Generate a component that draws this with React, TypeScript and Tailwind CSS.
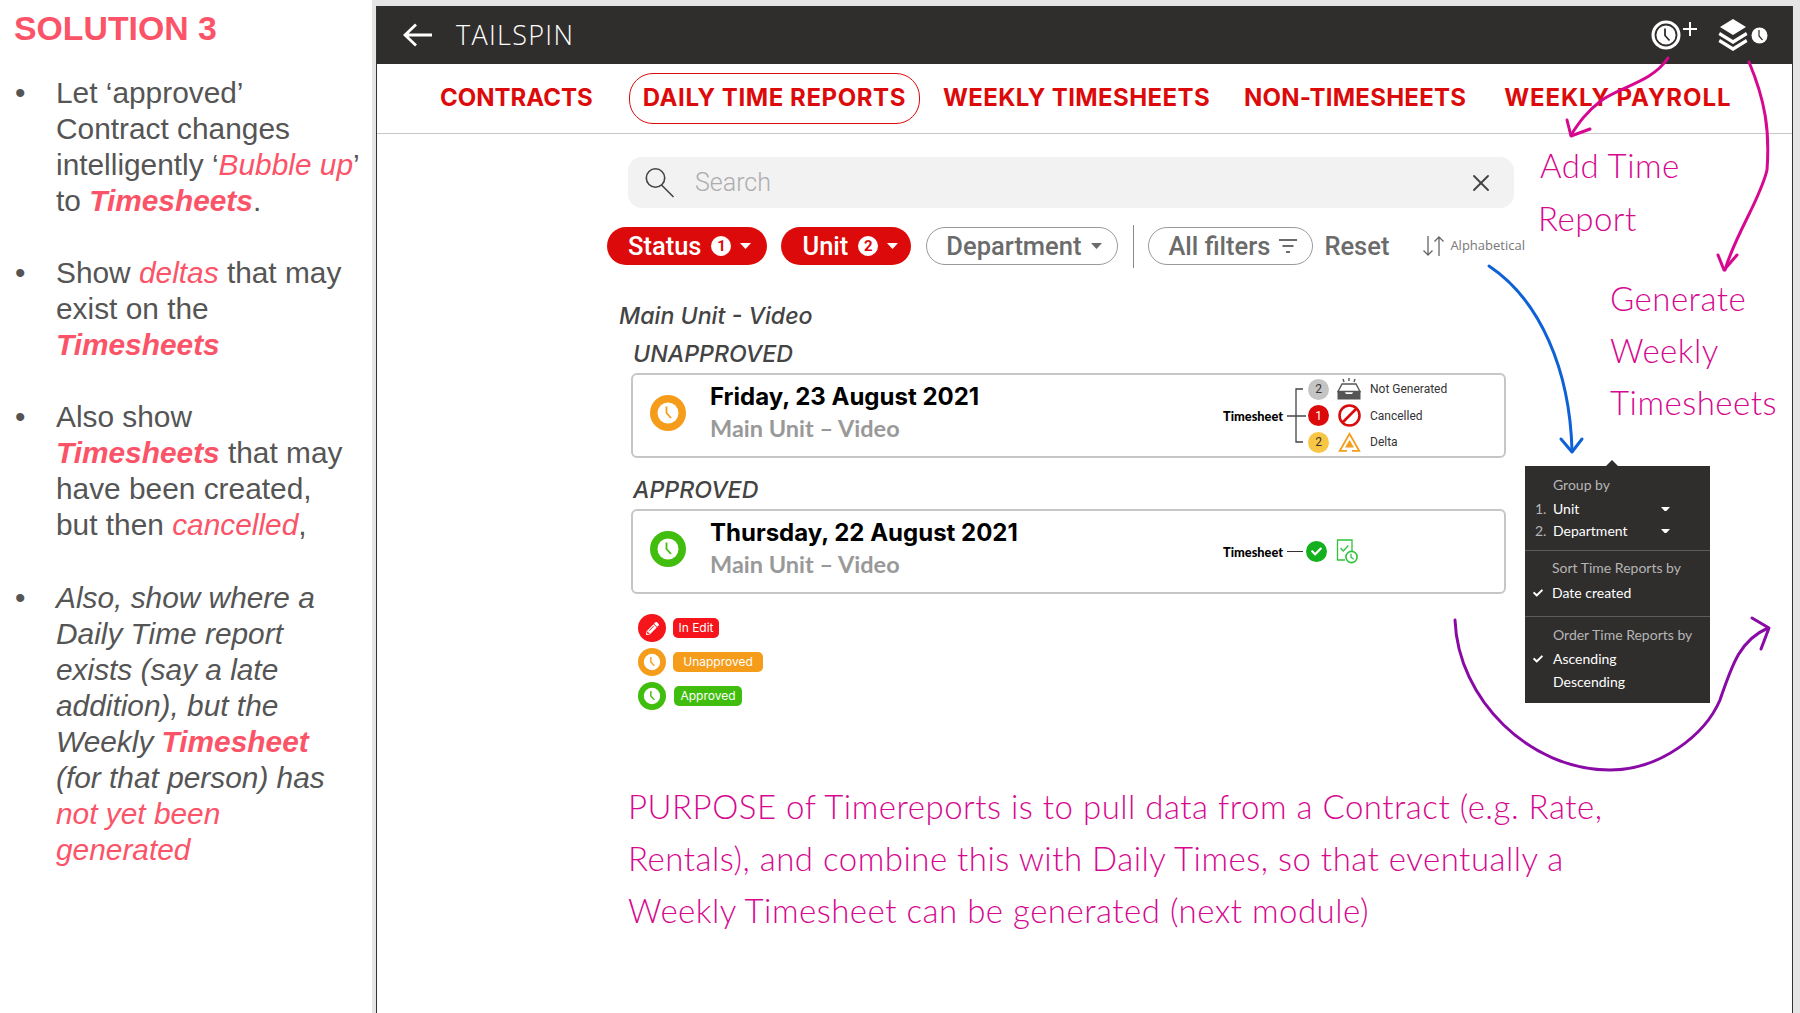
import { X } from "lucide-react"
import { FaCheck, FaPencilAlt } from "react-icons/fa"

const sans = "font-['Liberation_Sans',Arial,sans-serif]"
const hand = "font-['Lato',sans-serif] font-light text-[#d6088f]"

function Caret({ color = "white", w = 12 }: { color?: string; w?: number }) {
  return (
    <svg width={w} height={w * 0.55} viewBox="0 0 12 6.6" className="shrink-0">
      <path d="M0 0h12L6 6.6z" fill={color} />
    </svg>
  )
}

function ClockBadge({ color, size = 36 }: { color: string; size?: number }) {
  return (
    <svg width={size} height={size} viewBox="0 0 36 36" className="shrink-0">
      <circle cx="18" cy="18" r="18" fill={color} />
      <circle cx="18" cy="18" r="10.5" fill="white" />
      <path d="M16.5 11.5v6.5l4.5 5" fill="none" stroke={color} strokeWidth="1.8" />
    </svg>
  )
}

function CountDot({ bg, fg, n }: { bg: string; fg: string; n: number }) {
  return (
    <span className={`flex h-[21px] w-[21px] shrink-0 items-center justify-center rounded-full text-[12px] ${bg} ${fg}`}>
      {n}
    </span>
  )
}

function InboxIcon() {
  return (
    <svg width="24" height="22" viewBox="0 0 24 22">
      <path d="M6 1l1 3M12 0v3M18 1l-1 3" stroke="#555" strokeWidth="1.4" fill="none" />
      <path d="M5 6h14l4 7.5H1z" fill="none" stroke="#555" strokeWidth="1.4" />
      <path d="M0.5 13h6.5l2 3h6l2-3h6.5v8.5H0.5z" fill="#555" />
    </svg>
  )
}

function CancelledIcon() {
  return (
    <svg width="23" height="23" viewBox="0 0 23 23">
      <circle cx="11.5" cy="11.5" r="10" fill="none" stroke="#d90b0b" strokeWidth="2.6" />
      <path d="M18.5 4.5L4.5 18.5" stroke="#d90b0b" strokeWidth="2.6" />
    </svg>
  )
}

function DeltaIcon() {
  return (
    <svg width="23" height="20" viewBox="0 0 23 20">
      <path d="M9 18.8H1.8L11.5 1.8l9.7 17H14" fill="none" stroke="#f59c1a" strokeWidth="1.8" />
      <path d="M11.5 8l4.5 7.5H7z" fill="#f59c1a" />
    </svg>
  )
}

function SheetClockIcon() {
  return (
    <svg width="22" height="25" viewBox="0 0 22 25">
      <path d="M9 21H1.5V1h14.5v11" fill="none" stroke="#2fc23a" strokeWidth="1.3" />
      <path d="M4.5 9l2.8 3 5-5.5" fill="none" stroke="#2fc23a" strokeWidth="1.3" />
      <circle cx="15.5" cy="18" r="5.6" fill="white" stroke="#2fc23a" strokeWidth="1.6" />
      <path d="M15 14.8v3.4l2.6 2" fill="none" stroke="#2fc23a" strokeWidth="1.3" />
    </svg>
  )
}

const Red = ({ children, bold }: { children: React.ReactNode; bold?: boolean }) => (
  <em className={`text-[#fb5468] ${bold ? "font-bold" : ""}`}>{children}</em>
)

function Bullet({ children, italic }: { children: React.ReactNode; italic?: boolean }) {
  return (
    <div className={`mb-[36.2px] flex ${italic ? "italic" : ""}`}>
      <span className="w-[42px] pl-[1px] not-italic">•</span>
      <p className="flex-1">{children}</p>
    </div>
  )
}

function Sidebar() {
  return (
    <aside className={`w-[372px] shrink-0 bg-white pl-[14px] pt-[10px] text-[29.85px] leading-[36px] text-[#555] ${sans}`}>
      <h1 className="mb-[29px] text-[33.8px] font-bold text-[#fb5468]">SOLUTION 3</h1>
      <Bullet>
        Let ‘approved’<br />Contract changes<br />intelligently ‘<Red>Bubble up</Red>’<br />to <Red bold>Timesheets</Red>.
      </Bullet>
      <Bullet>
        Show <Red>deltas</Red> that may<br />exist on the<br /><Red bold>Timesheets</Red>
      </Bullet>
      <Bullet>
        Also show<br /><Red bold>Timesheets</Red> that may<br />have been created,<br />but then <Red>cancelled</Red>,
      </Bullet>
      <Bullet italic>
        Also, show where a<br />Daily Time report<br />exists (say a late<br />addition), but the<br />Weekly <Red bold>Timesheet</Red><br />(for that person) has<br /><Red>not yet been</Red><br /><Red>generated</Red>
      </Bullet>
    </aside>
  )
}

function TopBar() {
  return (
    <header className="flex h-[58px] items-center bg-[#302e2d] text-white">
      <svg width="30" height="24" viewBox="0 0 30 24" className="ml-[26px]">
        <path d="M29 12H2M13 1.5L2 12l11 10.5" fill="none" stroke="white" strokeWidth="2.8" />
      </svg>
      <span className="ml-[23px] font-['Open_Sans',sans-serif] text-[27px] font-light tracking-[1.3px]">TAILSPIN</span>
      <div className="ml-auto mr-[24px] flex items-center">
        <svg width="46" height="34" viewBox="0 0 46 34">
          <circle cx="15" cy="17" r="14.5" fill="white" />
          <circle cx="15" cy="17" r="10.5" fill="none" stroke="#302e2d" strokeWidth="1.8" />
          <path d="M14 10.5v7l4.5 5" fill="none" stroke="#302e2d" strokeWidth="1.8" />
          <path d="M39 4v14M32 11h14" stroke="white" strokeWidth="2" />
        </svg>
        <svg width="30" height="32" viewBox="0 0 30 32" className="ml-[21px]">
          <path d="M15 0l13 8-13 8L2 8z" fill="white" />
          <path d="M2 13l13 8 13-8 1.5 3L15 25 .5 16z" fill="white" />
          <path d="M2 20l13 8 13-8 1.5 3L15 32 .5 23z" fill="white" />
        </svg>
        <svg width="17" height="17" viewBox="0 0 17 17" className="ml-[3px]">
          <circle cx="8.5" cy="8.5" r="8" fill="white" />
          <path d="M8 3v6l3.5 4" fill="none" stroke="#302e2d" strokeWidth="1.2" />
        </svg>
      </div>
    </header>
  )
}

function Tabs() {
  return (
    <nav className="flex h-[70px] items-center border-b border-[#c8c8c8] pb-px pl-[63px] font-['Inter',sans-serif] text-[24px] font-bold text-[#dc0a0a]">
      <span className="whitespace-nowrap">CONTRACTS</span>
      <span className="ml-[36px] flex h-[51px] items-center whitespace-nowrap rounded-[24px] border border-[#dc0a0a] px-[13px] tracking-[0.57px]">
        DAILY TIME REPORTS
      </span>
      <span className="ml-[23px] whitespace-nowrap tracking-[0.4px]">WEEKLY TIMESHEETS</span>
      <span className="ml-[34px] whitespace-nowrap tracking-[0.25px]">NON-TIMESHEETS</span>
      <span className="ml-[38px] whitespace-nowrap tracking-[0.9px]">WEEKLY PAYROLL</span>
    </nav>
  )
}

function SearchRow() {
  return (
    <div className="ml-[251px] mt-[23px] flex h-[51px] w-[886px] items-center rounded-[14px] bg-[#f2f2f2] pl-[17px] pr-[19px]">
      <svg width="30" height="31" viewBox="0 0 30 31" className="shrink-0">
        <circle cx="10.5" cy="11" r="9.2" fill="none" stroke="#444" strokeWidth="1.6" />
        <path d="M16.5 18L28.5 30" stroke="#444" strokeWidth="1.6" />
      </svg>
      <span className="ml-[20px] pt-px font-['Roboto',sans-serif] text-[25px] font-light text-[#adadad]">Search</span>
      <X size={28} strokeWidth={1.6} className="ml-auto text-[#444]" />
    </div>
  )
}

function RedPill({ label, n, pad }: { label: string; n: number; pad: string }) {
  return (
    <span className={`flex h-[38px] items-center rounded-full bg-[#dc0a0a] pl-[21px] text-white ${pad}`}>
      {label}
      <span className="ml-[10px] flex h-[20px] w-[20px] items-center justify-center rounded-full bg-white text-[15px] font-bold text-[#dc0a0a]">
        {n}
      </span>
      <span className="ml-[9px]"><Caret w={11} /></span>
    </span>
  )
}

function FilterRow() {
  return (
    <div className="ml-[230px] mt-[19px] flex h-[38px] items-center font-['Roboto',sans-serif] text-[25.5px] font-medium text-[#6b6b6b]">
      <RedPill label="Status" n={1} pad="pr-[16px]" />
      <span className="ml-[14px]"><RedPill label="Unit" n={2} pad="pr-[13px]" /></span>
      <span className="ml-[15px] flex h-[38px] items-center rounded-full border border-[#9a9a9a] pl-[19px] pr-[15px]">
        Department<span className="ml-[10px]"><Caret color="#6b6b6b" w={11} /></span>
      </span>
      <span className="ml-[15px] h-[43px] w-px bg-[#8a8a8a]" />
      <span className="ml-[14px] flex h-[38px] items-center rounded-full border border-[#9a9a9a] pl-[19px] pr-[15px]">
        All filters
        <svg width="18" height="16" viewBox="0 0 18 16" className="ml-[9px]">
          <path d="M0 2h18M3.5 8h11M7 14h4" stroke="#6b6b6b" strokeWidth="2" />
        </svg>
      </span>
      <span className="ml-[11px]">Reset</span>
      <svg width="23" height="22" viewBox="0 0 23 22" className="ml-[33px]">
        <path d="M6 1v19M1.5 15.5L6 20l4.5-4.5M17 21V2M12.5 6.5L17 2l4.5 4.5" fill="none" stroke="#666" strokeWidth="1.3" />
      </svg>
      <span className="ml-[5px] font-['Open_Sans',sans-serif] text-[13px] font-normal text-[#777]">Alphabetical</span>
    </div>
  )
}

function TimeCard({ date, color, children }: { date: string; color: string; children: React.ReactNode }) {
  return (
    <div className="ml-[12px] mt-[4px] flex h-[85px] w-[875px] items-center rounded-[6px] border-2 border-[#c6c6c6] bg-white pl-[17px] font-normal not-italic">
      <span className="mb-[6px] flex"><ClockBadge color={color} /></span>
      <div className="mb-[7px] ml-[24px]">
        <p className="font-['Inter',sans-serif] text-[24px] font-bold leading-[32px] text-black">{date}</p>
        <p className="font-['Lato',sans-serif] text-[23.5px] font-bold leading-[30px] text-[#999]">Main Unit – Video</p>
      </div>
      <div className="ml-auto flex w-[281px] items-center">{children}</div>
    </div>
  )
}

const sheetLabel = "w-[64px] font-['Lato',sans-serif] text-[12.8px] font-black text-black"

function UnapprovedStatus() {
  const rows = [
    { dot: <CountDot bg="bg-[#c4c4c4]" fg="text-[#333]" n={2} />, icon: <InboxIcon />, label: "Not Generated" },
    { dot: <CountDot bg="bg-[#dc0a0a]" fg="text-white" n={1} />, icon: <CancelledIcon />, label: "Cancelled" },
    { dot: <CountDot bg="bg-[#f9c544]" fg="text-[#333]" n={2} />, icon: <DeltaIcon />, label: "Delta" },
  ]
  return (
    <>
      <span className={sheetLabel}>Timesheet</span>
      <svg width="21" height="56" viewBox="0 0 21 56" className="shrink-0">
        <path d="M0 28h19M16 1H9v53h7" fill="none" stroke="#444" strokeWidth="1.3" />
      </svg>
      <div className="font-['Roboto',sans-serif] text-[12px] leading-none text-[#333]">
        {rows.map((r) => (
          <div key={r.label} className="flex h-[26.5px] items-center">
            {r.dot}
            <span className="ml-[8px] flex w-[24px] justify-center">{r.icon}</span>
            <span className="ml-[9px]">{r.label}</span>
          </div>
        ))}
      </div>
    </>
  )
}

function ApprovedStatus() {
  return (
    <>
      <span className={sheetLabel}>Timesheet</span>
      <span className="h-px w-[16px] bg-[#333]" />
      <span className="ml-[3px] flex h-[21px] w-[21px] items-center justify-center rounded-full bg-[#14b01e] text-white">
        <FaCheck size={11} />
      </span>
      <span className="ml-[9px] flex"><SheetClockIcon /></span>
    </>
  )
}

function Legend() {
  const rows = [
    { badge: "w-[46px] bg-[#f5151a]", label: "In Edit", icon: (
      <span className="flex h-[28px] w-[28px] items-center justify-center rounded-full bg-[#f5151a] text-white"><FaPencilAlt size={13} /></span>
    ) },
    { badge: "w-[90px] bg-[#f59c1a]", label: "Unapproved", icon: <ClockBadge color="#f59c1a" size={28} /> },
    { badge: "w-[68px] bg-[#40bd0d] ml-[8px]", label: "Approved", icon: <ClockBadge color="#40bd0d" size={28} /> },
  ]
  return (
    <div className="ml-[19px] mt-[20px] flex flex-col gap-[6px] font-['Inter',sans-serif] text-[12px] font-normal not-italic text-white">
      {rows.map((r) => (
        <div key={r.label} className="flex h-[28px] items-center">
          {r.icon}
          <span className={`ml-[7px] flex h-[20px] items-center justify-center rounded-[5px] ${r.badge}`}>{r.label}</span>
        </div>
      ))}
    </div>
  )
}

function MenuCheck() {
  return <FaCheck size={10} className="text-white" />
}

function SortMenu() {
  return (
    <div className="absolute left-[1525px] top-[466px] w-[185px] bg-[#2f2e2d] font-['Lato',sans-serif] text-[14px] leading-[22px] text-white">
      <span className="absolute left-[81px] top-[-6px] h-0 w-0 border-x-[6px] border-b-[6px] border-x-transparent border-b-[#2f2e2d]" />
      <div className="h-[84px] pl-[10px] pt-[8px]">
        <p className="pl-[18px] text-[#b5b5b5]">Group by</p>
        <div className="mt-[2px] flex items-center">
          <span className="w-[18px] text-[#b5b5b5]">1.</span>
          <span className="w-[108px]">Unit</span>
          <Caret w={9} />
        </div>
        <div className="flex items-center">
          <span className="w-[18px] text-[#b5b5b5]">2.</span>
          <span className="w-[108px]">Department</span>
          <Caret w={9} />
        </div>
      </div>
      <div className="h-[66px] border-t border-[#5c5c5c] pl-[8px] pt-[6px]">
        <p className="pl-[19px] text-[#b5b5b5]">Sort Time Reports by</p>
        <div className="mt-[3px] flex items-center">
          <span className="w-[19px]"><MenuCheck /></span>
          Date created
        </div>
      </div>
      <div className="h-[87px] border-t border-[#5c5c5c] pl-[8px] pt-[7px]">
        <p className="pl-[20px] text-[#b5b5b5]">Order Time Reports by</p>
        <div className="mt-[2px] flex items-center">
          <span className="w-[20px]"><MenuCheck /></span>
          Ascending
        </div>
        <p className="mt-px pl-[20px]">Descending</p>
      </div>
    </div>
  )
}

const notes = [
  { text: "Add Time", cls: "left-[1540px] top-[145px]" },
  { text: "Report", cls: "left-[1538px] top-[198px]" },
  { text: "Generate", cls: "left-[1610px] top-[278px]" },
  { text: "Weekly", cls: "left-[1610px] top-[330px]" },
  { text: "Timesheets", cls: "left-[1610px] top-[382px]" },
  { text: "PURPOSE of Timereports is to pull data from a Contract (e.g. Rate,", cls: "left-[628px] top-[786px]" },
  { text: "Rentals), and combine this with Daily Times, so that eventually a", cls: "left-[628px] top-[838px]" },
  { text: "Weekly Timesheet can be generated (next module)", cls: "left-[628px] top-[890px]" },
]

function Annotations() {
  return (
    <>
      <svg width="1800" height="1013" viewBox="0 0 1800 1013" fill="none" strokeLinecap="round" strokeLinejoin="round" className="pointer-events-none absolute left-0 top-0 z-10">
        <g stroke="#d6088f" strokeWidth="3">
          <path d="M1668 58C1652 82 1622 86 1602 100C1586 112 1578 124 1571 135" />
          <path d="M1567 120L1571 136L1590 129" />
          <path d="M1749 62C1765 100 1770 130 1767 170C1760 200 1735 235 1725 270" />
          <path d="M1718 255L1724 270L1737 255" />
        </g>
        <g stroke="#0f62d6" strokeWidth="3">
          <path d="M1489 266C1540 300 1570 370 1572 451" />
          <path d="M1561 439L1572 452L1582 439" />
        </g>
        <g stroke="#8a0aa6" strokeWidth="3">
          <path d="M1455 620C1458 700 1530 770 1610 770C1660 770 1705 735 1720 700C1732 665 1740 640 1768 628" />
          <path d="M1752 618L1769 628L1761 649" />
        </g>
      </svg>
      {notes.map((n) => (
        <span key={n.text} className={`absolute z-10 whitespace-nowrap text-[33px] leading-[40px] tracking-[0.5px] ${hand} ${n.cls}`}>
          {n.text}
        </span>
      ))}
    </>
  )
}

export default function App() {
  return (
    <div className="relative flex h-[1013px] w-[1800px] overflow-hidden bg-[#e5e5e5]">
      <Sidebar />
      <main className="ml-[4px] mr-[7px] mt-[6px] flex-1 border-x border-[#333] bg-white">
        <TopBar />
        <Tabs />
        <SearchRow />
        <FilterRow />
        <div className="ml-[242px] mt-[36px] font-['Inter',sans-serif] text-[23.2px] font-medium italic leading-[30px] text-[#444]">
          <p>Main Unit - Video</p>
          <p className="ml-[14px] mt-[8px]">UNAPPROVED</p>
          <TimeCard date="Friday, 23 August 2021" color="#f59c1a"><UnapprovedStatus /></TimeCard>
          <p className="ml-[14px] mt-[17px]">APPROVED</p>
          <TimeCard date="Thursday, 22 August 2021" color="#40bd0d"><ApprovedStatus /></TimeCard>
          <Legend />
        </div>
      </main>
      <SortMenu />
      <Annotations />
    </div>
  )
}
